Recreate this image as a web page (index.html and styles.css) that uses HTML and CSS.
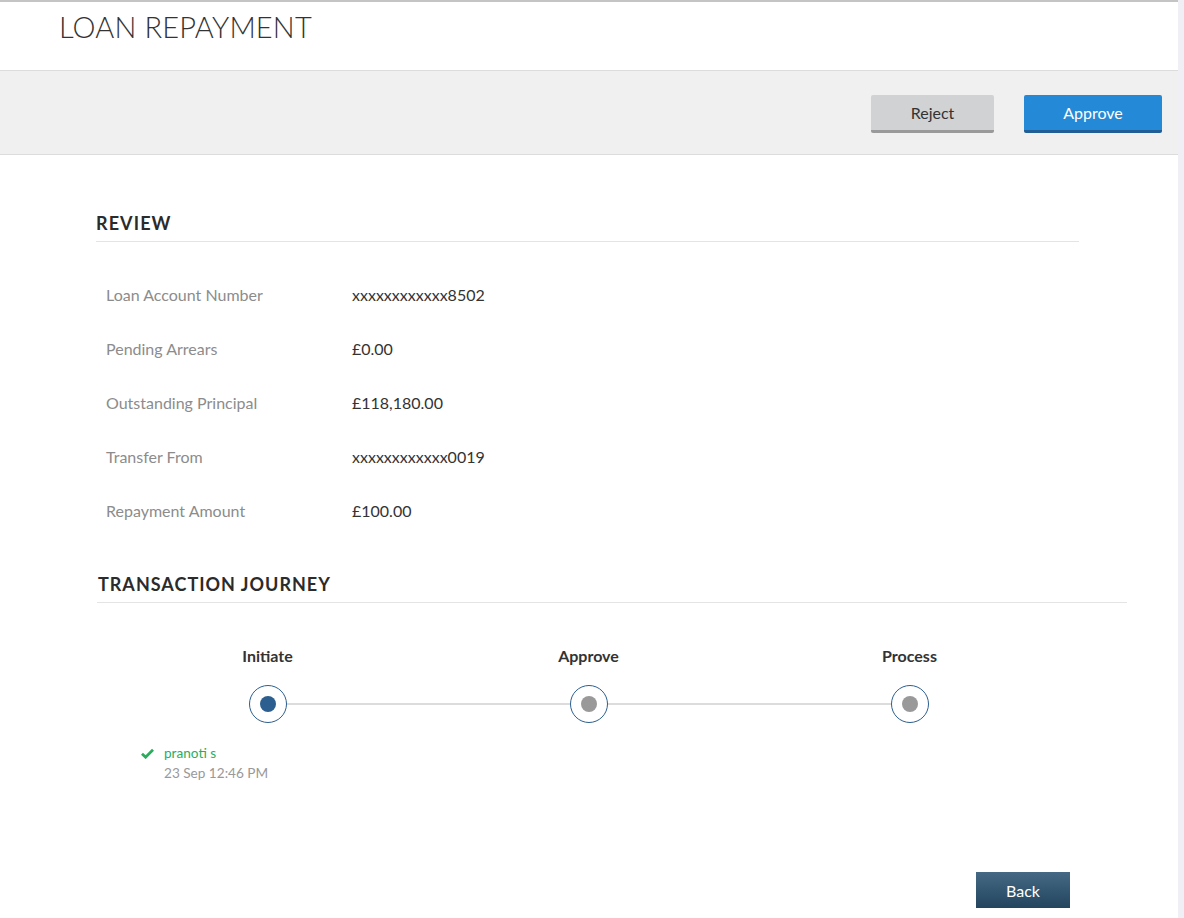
FILE: index.html
```html
<!DOCTYPE html>
<html>
<head>
<meta charset="utf-8">
<link rel="stylesheet" href="styles.css">
</head>
<body>
<div class="page">
  <header class="header">
    <h1 class="title">LOAN REPAYMENT</h1>
  </header>
  <div class="action-bar">
    <button class="btn btn-reject">Reject</button>
    <button class="btn btn-approve">Approve</button>
  </div>

  <main class="content">
    <section class="review">
      <h2 class="section-title">REVIEW</h2>
      <div class="rows">
        <div class="row"><span class="label">Loan Account Number</span><span class="value">xxxxxxxxxxxx8502</span></div>
        <div class="row"><span class="label">Pending Arrears</span><span class="value">£0.00</span></div>
        <div class="row"><span class="label">Outstanding Principal</span><span class="value">£118,180.00</span></div>
        <div class="row"><span class="label">Transfer From</span><span class="value">xxxxxxxxxxxx0019</span></div>
        <div class="row"><span class="label">Repayment Amount</span><span class="value">£100.00</span></div>
      </div>
    </section>

    <section class="journey">
      <h2 class="section-title journey-title">TRANSACTION JOURNEY</h2>
      <div class="steps">
        <div class="step step-first">
          <div class="step-name">Initiate</div>
          <div class="step-dot done"><span></span></div>
          <div class="step-info">
            <svg class="check" width="13" height="11" viewBox="0 0 13 11"><path d="M1 5.8 L4.6 9.2 L12 1.8" fill="none" stroke="#2aad5e" stroke-width="2.8"/></svg>
            <div>
              <div class="who">pranoti s</div>
              <div class="when">23 Sep 12:46 PM</div>
            </div>
          </div>
        </div>
        <div class="step">
          <div class="step-name">Approve</div>
          <div class="step-dot"><span></span></div>
        </div>
        <div class="step step-last">
          <div class="step-name">Process</div>
          <div class="step-dot"><span></span></div>
        </div>
      </div>
    </section>

    <div class="footer">
      <button class="btn btn-back">Back</button>
    </div>
  </main>
</div>
</body>
</html>
```

FILE: styles.css
```css
html, body {
  margin: 0;
  padding: 0;
  background: #efeff5;
}
body {
  font-family: Lato, "Open Sans", sans-serif;
  color: #333;
}
.page {
  width: 1178px;
  height: 918px;
  background: #fff;
  border-top: 2px solid #c4c4c4;
  box-sizing: border-box;
  overflow: hidden;
}
.header {
  height: 68px;
  padding: 7px 0 0 59px;
  box-sizing: border-box;
}
.title {
  margin: 0;
  font-size: 29px;
  font-weight: 300;
  line-height: 36px;
  letter-spacing: 0.15px;
  color: #333;
}
.action-bar {
  height: 85px;
  box-sizing: border-box;
  background: #f0f0f0;
  border-top: 1px solid #dcdcdc;
  border-bottom: 1px solid #dcdcdc;
  display: flex;
  justify-content: flex-end;
  align-items: flex-start;
  gap: 30px;
  padding: 24px 16px 0 0;
}
.btn {
  font-family: Lato, sans-serif;
  font-size: 16px;
  border: none;
  border-radius: 2px;
  cursor: pointer;
  padding: 0;
}
.btn-reject {
  width: 123px;
  height: 38px;
  background: #d1d2d4;
  border-bottom: 3px solid #9a9a9a;
  color: #333;
}
.btn-approve {
  width: 138px;
  height: 38px;
  background: #2489d6;
  border-bottom: 3px solid #1f5f96;
  color: #fff;
}
.content {
  padding: 0 0 0 96px;
}
.review {
  width: 983px;
  margin-top: 56px;
}
.section-title {
  margin: 0;
  font-size: 18px;
  font-weight: 700;
  letter-spacing: 1.1px;
  line-height: 24px;
  padding-bottom: 6px;
  border-bottom: 1px solid #e4e4e4;
  color: #2b2b2b;
}
.rows {
  padding: 41px 0 0 10px;
}
.row {
  display: flex;
  height: 54px;
  align-items: flex-start;
  font-size: 16px;
  line-height: 24px;
}
.label {
  width: 246px;
  color: #8c8c8c;
}
.value {
  color: #333;
}
.journey {
  margin-top: 19px;
  margin-left: 1px;
  width: 1030px;
}
.journey-title {
  padding-left: 1px;
  letter-spacing: 1px;
}
.steps {
  display: grid;
  grid-template-columns: repeat(3, 321px);
  margin-left: 10px;
  padding-top: 41px;
}
.step {
  display: flex;
  flex-direction: column;
  align-items: center;
  position: relative;
}
.step-name {
  font-size: 16px;
  font-weight: 700;
  line-height: 24px;
  color: #333;
  height: 24px;
}
.step-dot {
  margin-top: 17px;
  width: 38px;
  height: 38px;
  box-sizing: border-box;
  border: 1px solid #2c5f8f;
  border-radius: 50%;
  background: #fff;
  display: flex;
  align-items: center;
  justify-content: center;
  position: relative;
  z-index: 1;
}
.step-dot span {
  width: 16px;
  height: 16px;
  border-radius: 50%;
  background: #999;
}
.step-dot.done span {
  background: #2c5f8f;
}
.step::after {
  content: "";
  position: absolute;
  top: 59px;
  left: 50%;
  width: 100%;
  height: 2px;
  background: #dcdcdc;
}
.step-last::after {
  display: none;
}
.step-info {
  align-self: flex-start;
  margin-left: 34px;
  margin-top: 20px;
  display: flex;
  gap: 10px;
  font-size: 13.6px;
  line-height: 20px;
}
.check {
  margin-top: 5px;
}
.who {
  color: #2aad5e;
}
.when {
  color: #999;
}
.footer {
  display: flex;
  justify-content: flex-end;
  width: 974px;
  margin-top: 89px;
}
.btn-back {
  width: 94px;
  height: 36px;
  border-radius: 0;
  color: #fff;
  background: linear-gradient(#456984, #23455e);
}
```
